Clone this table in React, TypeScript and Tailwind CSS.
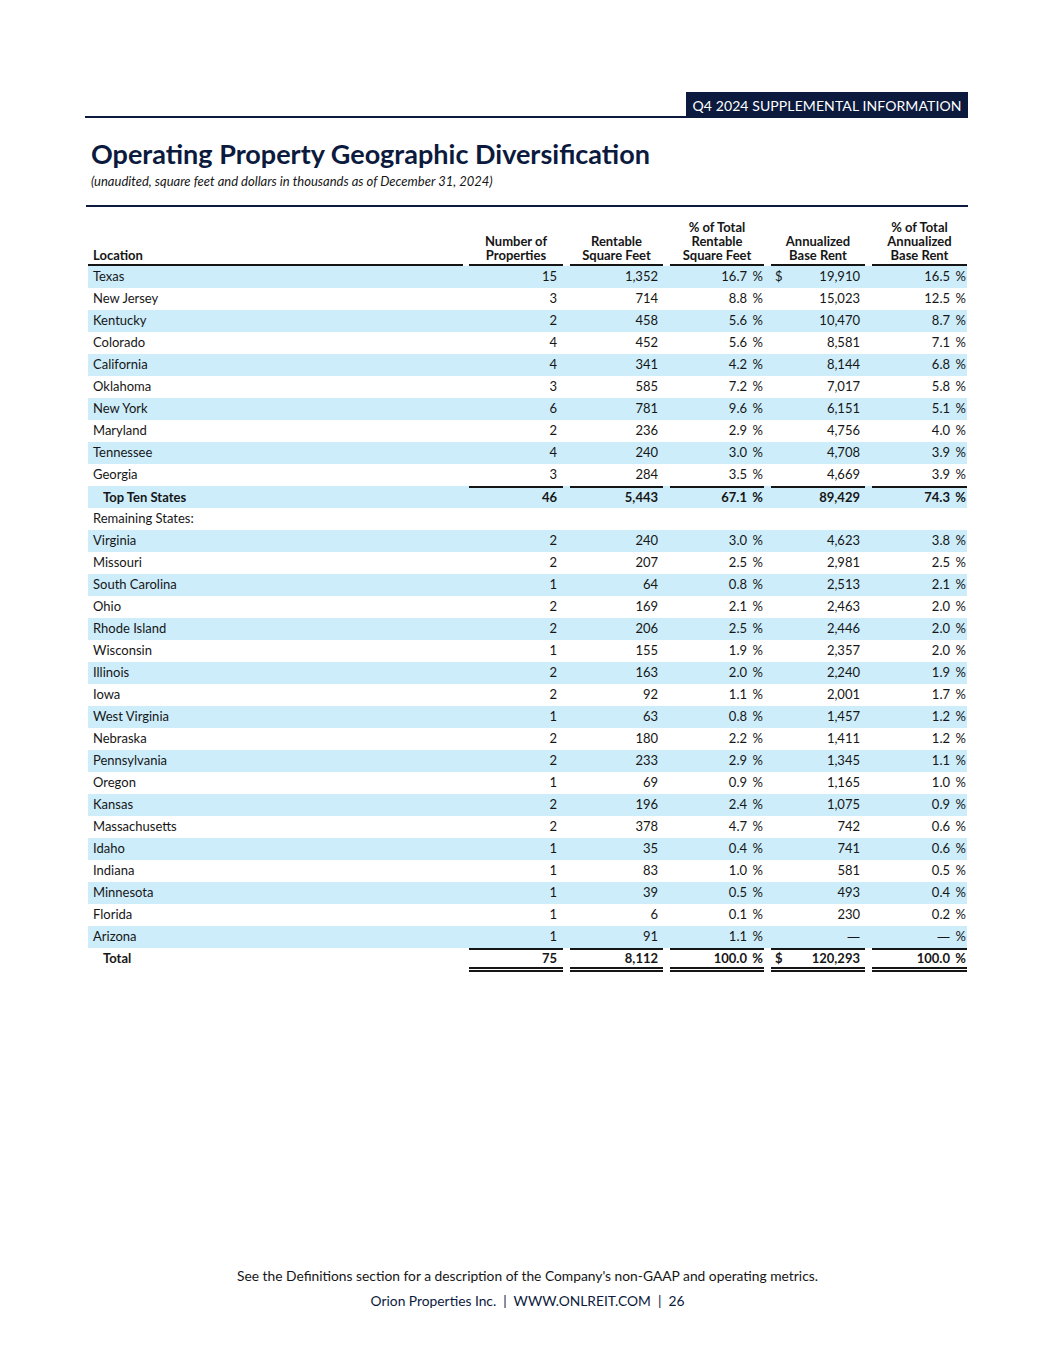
import React from "react";

type Row = {
  kind: "data" | "sub" | "label" | "total";
  name: string;
  n?: string;
  sf?: string;
  pct?: string;
  rent?: string;
  pctRent?: string;
  dollar?: boolean;
};

const d = (name: string, n: string, sf: string, pct: string, rent: string, pctRent: string, dollar = false): Row => ({
  kind: "data", name, n, sf, pct, rent, pctRent, dollar,
});

const rows: Row[] = [
  d("Texas", "15", "1,352", "16.7", "19,910", "16.5", true),
  d("New Jersey", "3", "714", "8.8", "15,023", "12.5"),
  d("Kentucky", "2", "458", "5.6", "10,470", "8.7"),
  d("Colorado", "4", "452", "5.6", "8,581", "7.1"),
  d("California", "4", "341", "4.2", "8,144", "6.8"),
  d("Oklahoma", "3", "585", "7.2", "7,017", "5.8"),
  d("New York", "6", "781", "9.6", "6,151", "5.1"),
  d("Maryland", "2", "236", "2.9", "4,756", "4.0"),
  d("Tennessee", "4", "240", "3.0", "4,708", "3.9"),
  d("Georgia", "3", "284", "3.5", "4,669", "3.9"),
  { kind: "sub", name: "Top Ten States", n: "46", sf: "5,443", pct: "67.1", rent: "89,429", pctRent: "74.3" },
  { kind: "label", name: "Remaining States:" },
  d("Virginia", "2", "240", "3.0", "4,623", "3.8"),
  d("Missouri", "2", "207", "2.5", "2,981", "2.5"),
  d("South Carolina", "1", "64", "0.8", "2,513", "2.1"),
  d("Ohio", "2", "169", "2.1", "2,463", "2.0"),
  d("Rhode Island", "2", "206", "2.5", "2,446", "2.0"),
  d("Wisconsin", "1", "155", "1.9", "2,357", "2.0"),
  d("Illinois", "2", "163", "2.0", "2,240", "1.9"),
  d("Iowa", "2", "92", "1.1", "2,001", "1.7"),
  d("West Virginia", "1", "63", "0.8", "1,457", "1.2"),
  d("Nebraska", "2", "180", "2.2", "1,411", "1.2"),
  d("Pennsylvania", "2", "233", "2.9", "1,345", "1.1"),
  d("Oregon", "1", "69", "0.9", "1,165", "1.0"),
  d("Kansas", "2", "196", "2.4", "1,075", "0.9"),
  d("Massachusetts", "2", "378", "4.7", "742", "0.6"),
  d("Idaho", "1", "35", "0.4", "741", "0.6"),
  d("Indiana", "1", "83", "1.0", "581", "0.5"),
  d("Minnesota", "1", "39", "0.5", "493", "0.4"),
  d("Florida", "1", "6", "0.1", "230", "0.2"),
  d("Arizona", "1", "91", "1.1", "—", "—"),
  { kind: "total", name: "Total", n: "75", sf: "8,112", pct: "100.0", rent: "120,293", pctRent: "100.0", dollar: true },
];

const GRID = "grid grid-cols-[381px_101px_100px_101px_101px_95px] w-[879px] ml-[88px]";

function Val({ v }: { v?: string }) {
  if (v === "—") {
    return <span style={{ fontFamily: "'Open Sans', 'Liberation Sans', sans-serif" }}>—</span>;
  }
  return <span>{v}</span>;
}

function HeaderCell({ lines, last = false }: { lines: string[]; last?: boolean }) {
  return (
    <div className="flex flex-col justify-end">
      <div className={`${last ? "" : "mr-[7px]"} border-b-2 border-[#151515] pb-[2px] text-center`}>
        {lines.map((l) => (
          <div key={l} className="leading-[14px]">{l}</div>
        ))}
      </div>
    </div>
  );
}

function DataRow({ r, idx }: { r: Row; idx: number }) {
  const blue = idx % 2 === 0;
  const bold = r.kind === "sub" || r.kind === "total";
  const seg =
    r.kind === "sub"
      ? "border-t-2 border-[#151515]"
      : r.kind === "total"
      ? "border-double border-[#151515] border-t-2 border-b-[5px]"
      : "";
  const h = r.kind === "total" ? "h-[24px]" : "h-[22px]";
  const show = r.kind !== "label";
  const labelPad = r.kind === "total" ? "pb-[3px]" : r.kind === "sub" ? "pt-[1px]" : "";
  return (
    <div className={`${GRID} ${blue ? "bg-[#cdedfb]" : "bg-white"} ${bold ? "font-bold" : ""}`}>
      <div className={`${h} flex items-center ${labelPad} ${bold ? "pl-[15px]" : "pl-[5px]"}`}>{r.name}</div>
      <div className={`${h} pr-[7px]`}>
        {show && <div className={`h-full ${seg} flex items-center justify-end pr-[6px]`}>{r.n}</div>}
      </div>
      <div className={`${h} pr-[7px]`}>
        {show && <div className={`h-full ${seg} flex items-center justify-end pr-[5px]`}>{r.sf}</div>}
      </div>
      <div className={`${h} pr-[7px]`}>
        {show && (
          <div className={`h-full ${seg} flex items-center justify-end pr-[1px]`}>
            <span>{r.pct}</span>
            <span className="w-[16px] text-right">%</span>
          </div>
        )}
      </div>
      <div className={`${h} pr-[7px]`}>
        {show && (
          <div className={`h-full ${seg} flex items-center justify-between pl-[4px] pr-[5px]`}>
            <span>{r.dollar ? "$" : ""}</span>
            <Val v={r.rent} />
          </div>
        )}
      </div>
      <div className={`${h}`}>
        {show && (
          <div className={`h-full ${seg} flex items-center justify-end pr-[1px]`}>
            <Val v={r.pctRent} />
            <span className="w-[16px] text-right">%</span>
          </div>
        )}
      </div>
    </div>
  );
}

export default function App() {
  return (
    <div
      className="w-[1055px] h-[1365px] bg-white flex flex-col text-[#161616]"
      style={{ fontFamily: "Lato, 'Open Sans', 'Liberation Sans', sans-serif" }}
    >
      {/* top header band */}
      <div className="mt-[92px] ml-[85px] mr-[87px] flex items-end">
        <div className="flex-1 h-[2px] bg-[#0b1a3d]" />
        <div className="w-[282px] h-[26px] bg-[#0b1a3d] text-white text-[14px] flex items-center justify-center tracking-[0.1px]">
          Q4 2024 SUPPLEMENTAL INFORMATION
        </div>
      </div>

      <h1 className="ml-[91px] mt-[21px] text-[27px] leading-[30px] font-bold text-[#0b1a3d]">
        Operating Property Geographic Diversification
      </h1>
      <div className="ml-[91px] mt-[4px] text-[13px] leading-[16px] italic text-[#161616]">
        (unaudited, square feet and dollars in thousands as of December 31, 2024)
      </div>

      <div className="ml-[86px] mr-[87px] mt-[16px] h-[2px] bg-[#0b1a3d]" />

      {/* table */}
      <div className="mt-[13px] text-[13px]">
        <div className={`${GRID} font-bold`}>
          <div className="flex flex-col justify-end">
            <div className="mr-[6px] border-b-2 border-[#151515] pb-[2px] pl-[5px] leading-[14px]">Location</div>
          </div>
          <HeaderCell lines={["Number of", "Properties"]} />
          <HeaderCell lines={["Rentable", "Square Feet"]} />
          <HeaderCell lines={["% of Total", "Rentable", "Square Feet"]} />
          <HeaderCell lines={["Annualized", "Base Rent"]} />
          <HeaderCell lines={["% of Total", "Annualized", "Base Rent"]} last />
        </div>
        {rows.map((r, i) => (
          <DataRow key={r.name} r={r} idx={i} />
        ))}
      </div>

      <div className="flex-1" />

      <div className="mb-[56px] flex flex-col items-center text-[13.8px] leading-[16px]">
        <div className="text-[#161616]">
          See the Definitions section for a description of the Company's non-GAAP and operating metrics.
        </div>
        <div className="mt-[9px] text-[#0b1a3d] whitespace-pre">
          {"Orion Properties Inc.  |  WWW.ONLREIT.COM  |  26"}
        </div>
      </div>
    </div>
  );
}
